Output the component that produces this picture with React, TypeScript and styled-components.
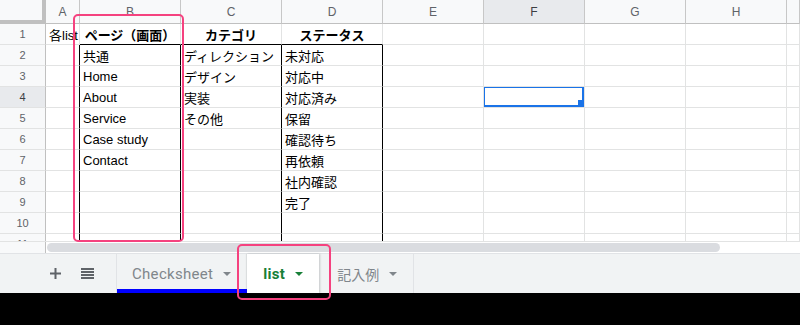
import styled, { createGlobalStyle } from "styled-components";

const GlobalStyle = createGlobalStyle`
  html, body {
    margin: 0;
    padding: 0;
    background: #fff;
  }
  * {
    box-sizing: border-box;
  }
`;

const CELL_FONT = `"Liberation Sans", Arial, "Noto Sans CJK JP", sans-serif`;
const TAB_FONT = `Roboto, "Noto Sans CJK JP", sans-serif`;

const GRID = "#e2e3e3";
const HEAD_LINE = "#c7c7c7";

const Page = styled.div`
  position: relative;
  width: 800px;
  height: 325px;
  overflow: hidden;
  display: flex;
  flex-direction: column;
  font-family: ${CELL_FONT};
  background: #fff;
`;

const Sheet = styled.div`
  flex: none;
  height: 241px;
  overflow: hidden;
  display: grid;
  grid-template-columns: 46px 34px repeat(7, 101px) 1fr;
  grid-template-rows: 24px;
  grid-auto-rows: 21px;
`;

const Corner = styled.div`
  background: #f8f9fa;
  border-right: 4px solid #c0c0c0;
  border-bottom: 4px solid #c0c0c0;
`;

const ColHead = styled.div<{ $active?: boolean }>`
  display: flex;
  align-items: center;
  justify-content: center;
  background: ${(p) => (p.$active ? "#e8eaed" : "#f8f9fa")};
  border-right: 1px solid ${HEAD_LINE};
  border-bottom: 1px solid #c0c0c0;
  color: ${(p) => (p.$active ? "#3c4043" : "#5f6368")};
  font-size: 12px;
  padding-top: 1px;
`;

const RowHead = styled.div<{ $active?: boolean }>`
  display: flex;
  align-items: center;
  justify-content: center;
  background: ${(p) => (p.$active ? "#e8eaed" : "#f8f9fa")};
  border-right: 1px solid #c0c0c0;
  border-bottom: 1px solid ${GRID};
  color: ${(p) => (p.$active ? "#3c4043" : "#5f6368")};
  font-size: 11px;
`;

const Cell = styled.div<{ $bold?: boolean; $center?: boolean; $edgeR?: boolean; $edgeB?: boolean }>`
  position: relative;
  display: flex;
  align-items: center;
  justify-content: ${(p) => (p.$center ? "center" : "flex-start")};
  padding: 1px 3px 0;
  border-right: 1px solid ${(p) => (p.$edgeR ? "#000" : GRID)};
  border-bottom: 1px solid ${(p) => (p.$edgeB ? "#000" : GRID)};
  font-size: 13px;
  font-weight: ${(p) => (p.$bold ? 700 : 400)};
  color: #000;
  white-space: nowrap;
  overflow: ${(p) => (p.$center ? "visible" : "hidden")};
`;

const Selection = styled.div`
  position: absolute;
  top: -1px;
  left: -1px;
  right: 0;
  bottom: 0;
  border: 2px solid #1a73e8;
  pointer-events: none;
`;

const Handle = styled.div`
  position: absolute;
  right: -2px;
  bottom: -1px;
  width: 6px;
  height: 6px;
  background: #1a73e8;
`;

const ScrollStrip = styled.div`
  flex: none;
  height: 12px;
  display: flex;
  border-top: 1px solid ${GRID};
`;

const ScrollGutter = styled.div`
  width: 46px;
  background: #f8f9fa;
  border-right: 1px solid #c0c0c0;
`;

const ScrollThumb = styled.div`
  margin: 1px 0 0 1px;
  width: 673px;
  height: 9px;
  border-radius: 5px;
  background: #dadce0;
`;

const TabBar = styled.div`
  flex: none;
  height: 40px;
  display: flex;
  background: #f1f3f4;
  border-top: 1px solid #e1e3e6;
`;

const Tools = styled.div`
  width: 117px;
  display: flex;
  align-items: center;
  gap: 20px;
  padding-left: 50px;
  border-right: 1px solid #e1e3e6;
  color: #5f6368;
`;

const Tab = styled.div<{ $active?: boolean; $stripe?: string; $pad: string; $divider?: boolean }>`
  display: flex;
  align-items: center;
  gap: 10px;
  padding: ${(p) => p.$pad};
  font-family: ${TAB_FONT};
  color: ${(p) => (p.$active ? "#188038" : "#80868b")};
  background: ${(p) => (p.$active ? "#fff" : "transparent")};
  box-shadow: ${(p) =>
    [
      p.$stripe ? `inset 0 -4px 0 ${p.$stripe}` : "",
      p.$active ? "1px 0 2px rgba(60, 64, 67, 0.25), -1px 0 1px rgba(60, 64, 67, 0.1)" : "",
    ]
      .filter(Boolean)
      .join(", ") || "none"};
  border-right: ${(p) => (p.$divider ? "1px solid #e1e3e6" : "none")};
  position: relative;
  z-index: ${(p) => (p.$active ? 1 : 0)};
`;

const TabLabel = styled.span<{ $small?: boolean; $strong?: boolean }>`
  font-size: ${(p) => (p.$small ? "14px" : "15px")};
  font-weight: ${(p) => (p.$strong ? 700 : 400)};
  letter-spacing: ${(p) => (p.$small ? "0" : "0.3px")};
`;

const Caret = styled.span`
  width: 0;
  height: 0;
  border-left: 4px solid transparent;
  border-right: 4px solid transparent;
  border-top: 4px solid currentColor;
  margin-top: 1px;
`;

const Footer = styled.div`
  flex: 1;
  background: #000;
`;

const Callout = styled.div<{ $x: number; $y: number; $w: number; $h: number }>`
  position: absolute;
  left: ${(p) => p.$x}px;
  top: ${(p) => p.$y}px;
  width: ${(p) => p.$w}px;
  height: ${(p) => p.$h}px;
  border: 2px solid #f5427f;
  border-radius: 5px;
  pointer-events: none;
  z-index: 5;
`;

const COLS = ["A", "B", "C", "D", "E", "F", "G", "H", ""];

type Row = { a?: string; b?: string; c?: string; d?: string };

const ROWS: Row[] = [
  { a: "各list", b: "ページ（画面）", c: "カテゴリ", d: "ステータス" },
  { b: "共通", c: "ディレクション", d: "未対応" },
  { b: "Home", c: "デザイン", d: "対応中" },
  { b: "About", c: "実装", d: "対応済み" },
  { b: "Service", c: "その他", d: "保留" },
  { b: "Case study", d: "確認待ち" },
  { b: "Contact", d: "再依頼" },
  { d: "社内確認" },
  { d: "完了" },
  {},
  {},
];

function PlusIcon() {
  return (
    <svg width="11" height="11" viewBox="0 0 11 11">
      <rect x="4.5" y="0" width="2" height="11" fill="currentColor" />
      <rect x="0" y="4.5" width="11" height="2" fill="currentColor" />
    </svg>
  );
}

function SheetsIcon() {
  return (
    <svg width="13" height="11" viewBox="0 0 13 11">
      {[0, 3, 6, 9].map((y) => (
        <rect key={y} x="0" y={y} width="13" height="2" fill="currentColor" />
      ))}
    </svg>
  );
}

export default function App() {
  return (
    <Page>
      <GlobalStyle />
      <Sheet>
        <Corner />
        {COLS.map((c, i) => (
          <ColHead key={i} $active={c === "F"}>
            {c}
          </ColHead>
        ))}
        {ROWS.map((row, i) => {
          const n = i + 1;
          const header = n === 1;
          const boxed = n >= 2;
          return [
            <RowHead key={`r${n}`} $active={n === 4}>
              {n}
            </RowHead>,
            <Cell key={`a${n}`} $edgeR={boxed}>
              {row.a}
            </Cell>,
            <Cell key={`b${n}`} $bold={header} $center={header} $edgeR={boxed} $edgeB={header}>
              {row.b}
            </Cell>,
            <Cell key={`c${n}`} $bold={header} $center={header} $edgeR={boxed} $edgeB={header}>
              {row.c}
            </Cell>,
            <Cell key={`d${n}`} $bold={header} $center={header} $edgeR={boxed} $edgeB={header}>
              {row.d}
            </Cell>,
            <Cell key={`e${n}`} />,
            <Cell key={`f${n}`}>
              {n === 4 && (
                <Selection>
                  <Handle />
                </Selection>
              )}
            </Cell>,
            <Cell key={`g${n}`} />,
            <Cell key={`h${n}`} />,
            <Cell key={`i${n}`} />,
          ];
        })}
      </Sheet>

      <ScrollStrip>
        <ScrollGutter />
        <ScrollThumb />
      </ScrollStrip>

      <TabBar>
        <Tools>
          <PlusIcon />
          <SheetsIcon />
        </Tools>
        <Tab $stripe="#0000ff" $pad="0 16px 0 15px">
          <TabLabel>Checksheet</TabLabel>
          <Caret />
        </Tab>
        <Tab $active $pad="0 16px 0 16px">
          <TabLabel $strong>list</TabLabel>
          <Caret />
        </Tab>
        <Tab $pad="0 16px 0 18px" $divider>
          <TabLabel $small>記入例</TabLabel>
          <Caret />
        </Tab>
      </TabBar>

      <Footer />

      <Callout $x={73} $y={14} $w={111} $h={228} />
      <Callout $x={237} $y={244} $w={94} $h={56} />
    </Page>
  );
}
